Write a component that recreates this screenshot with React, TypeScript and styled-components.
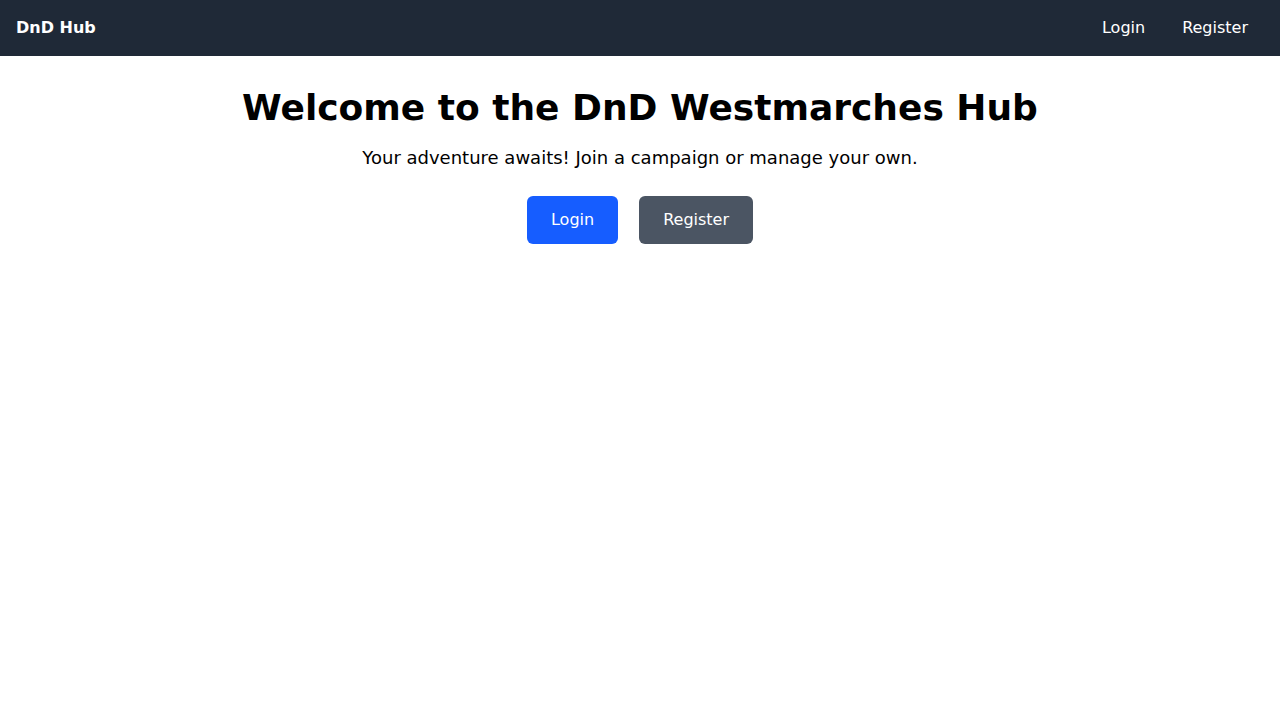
import React from "react";
import styled, { createGlobalStyle } from "styled-components";

const Global = createGlobalStyle`
  html, body { margin: 0; padding: 0; background: #ffffff; }
  body { font-family: "DejaVu Sans", sans-serif; color: #000; }
  * { box-sizing: border-box; }
`;

const NavBar = styled.nav`
  height: 56px;
  background: #1f2937;
  display: flex;
  align-items: center;
  justify-content: space-between;
  padding: 0 16px;
  color: #ffffff;
`;

const Brand = styled.a`
  font-weight: 700;
  font-size: 16px;
  line-height: 24px;
  color: #ffffff;
  text-decoration: none;
`;

const NavLinks = styled.div`
  display: flex;
  align-items: center;
  gap: 5px;
`;

const NavLink = styled.a`
  font-size: 16px;
  line-height: 24px;
  padding: 0 16px;
  color: #ffffff;
  text-decoration: none;
`;

const Main = styled.main`
  display: flex;
  flex-direction: column;
  align-items: center;
  padding: 32px;
`;

const Title = styled.h1`
  margin: 0 0 16px;
  font-size: 36px;
  line-height: 40px;
  font-weight: 700;
`;

const Subtitle = styled.p`
  margin: 0 0 24px;
  font-size: 18px;
  line-height: 28px;
`;

const Actions = styled.div`
  display: flex;
  gap: 21px;
`;

const Button = styled.a<{ $variant: "primary" | "secondary" }>`
  display: inline-block;
  padding: 12px 24px;
  font-size: 16px;
  line-height: 24px;
  border-radius: 6px;
  color: #ffffff;
  text-decoration: none;
  background: ${(p) => (p.$variant === "primary" ? "#165dff" : "#4b5563")};
`;

export default function App() {
  return (
    <>
      <Global />
      <NavBar>
        <Brand href="#">DnD Hub</Brand>
        <NavLinks>
          <NavLink href="#">Login</NavLink>
          <NavLink href="#">Register</NavLink>
        </NavLinks>
      </NavBar>
      <Main>
        <Title>Welcome to the DnD Westmarches Hub</Title>
        <Subtitle>Your adventure awaits! Join a campaign or manage your own.</Subtitle>
        <Actions>
          <Button href="#" $variant="primary">Login</Button>
          <Button href="#" $variant="secondary">Register</Button>
        </Actions>
      </Main>
    </>
  );
}
